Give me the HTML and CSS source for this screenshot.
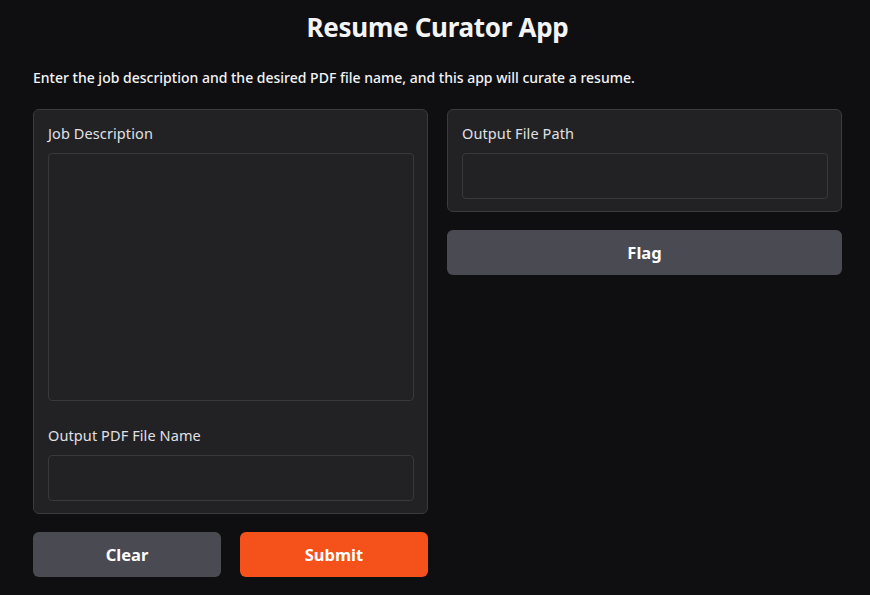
FILE: index.html
```html
<!DOCTYPE html>
<html>
<head>
<meta charset="utf-8">
<link rel="stylesheet" href="styles.css">
</head>
<body>
<div class="app">
  <h1 class="title">Resume Curator App</h1>
  <p class="desc">Enter the job description and the desired PDF file name, and this app will curate a resume.</p>
  <div class="row">
    <div class="col">
      <div class="block">
        <label class="label">Job Description</label>
        <div class="textarea"></div>
        <label class="label label-second">Output PDF File Name</label>
        <div class="input"></div>
      </div>
      <div class="buttons">
        <button class="btn btn-secondary">Clear</button>
        <button class="btn btn-primary">Submit</button>
      </div>
    </div>
    <div class="col">
      <div class="block">
        <label class="label">Output File Path</label>
        <div class="input"></div>
      </div>
      <button class="btn btn-secondary btn-full">Flag</button>
    </div>
  </div>
</div>
</body>
</html>
```

FILE: styles.css
```css
* { box-sizing: border-box; }
html, body {
  margin: 0;
  padding: 0;
  background: #0f0f11;
  font-family: "Noto Sans", "Open Sans", sans-serif;
  color: #f4f4f5;
}
.app {
  width: 870px;
  padding: 0 28px 0 33px;
}
.title {
  margin: 0;
  padding-top: 9px;
  height: 50px;
  text-align: center;
  font-size: 26px;
  font-weight: 700;
  line-height: 36px;
  color: #f4f4f5;
  letter-spacing: -0.3px;
}
.desc {
  margin: 17px 0 0 0;
  font-size: 14px;
  line-height: 22px;
  font-weight: 500;
  color: #f4f4f5;
  letter-spacing: 0;
}
.row {
  display: flex;
  gap: 19px;
  margin-top: 20px;
  align-items: flex-start;
}
.col {
  flex: 1;
  display: flex;
  flex-direction: column;
  gap: 18px;
}
.block {
  background: #222225;
  border: 1px solid #3a3a40;
  border-radius: 6px;
  padding: 13px 13px 12px 14px;
  display: flex;
  flex-direction: column;
}
.label {
  font-size: 14.5px;
  line-height: 20px;
  color: #e0e0e4;
  margin-bottom: 10px;
  letter-spacing: 0.1px;
}
.label-second {
  margin-top: 24px;
}
.textarea {
  height: 248px;
  background: #222225;
  border: 1px solid #38383e;
  border-radius: 4px;
}
.input {
  height: 46px;
  background: #222225;
  border: 1px solid #38383e;
  border-radius: 4px;
}
.buttons {
  display: flex;
  gap: 19px;
}
.btn {
  flex: 1;
  height: 45px;
  border: none;
  border-radius: 6px;
  font-family: "Noto Sans", "Open Sans", sans-serif;
  font-size: 16.5px;
  font-weight: 700;
  color: #ffffff;
  cursor: pointer;
}
.btn-secondary { background: #4a4a52; }
.btn-primary { background: #f4511b; }
.btn-full { flex: none; width: 100%; }
```
